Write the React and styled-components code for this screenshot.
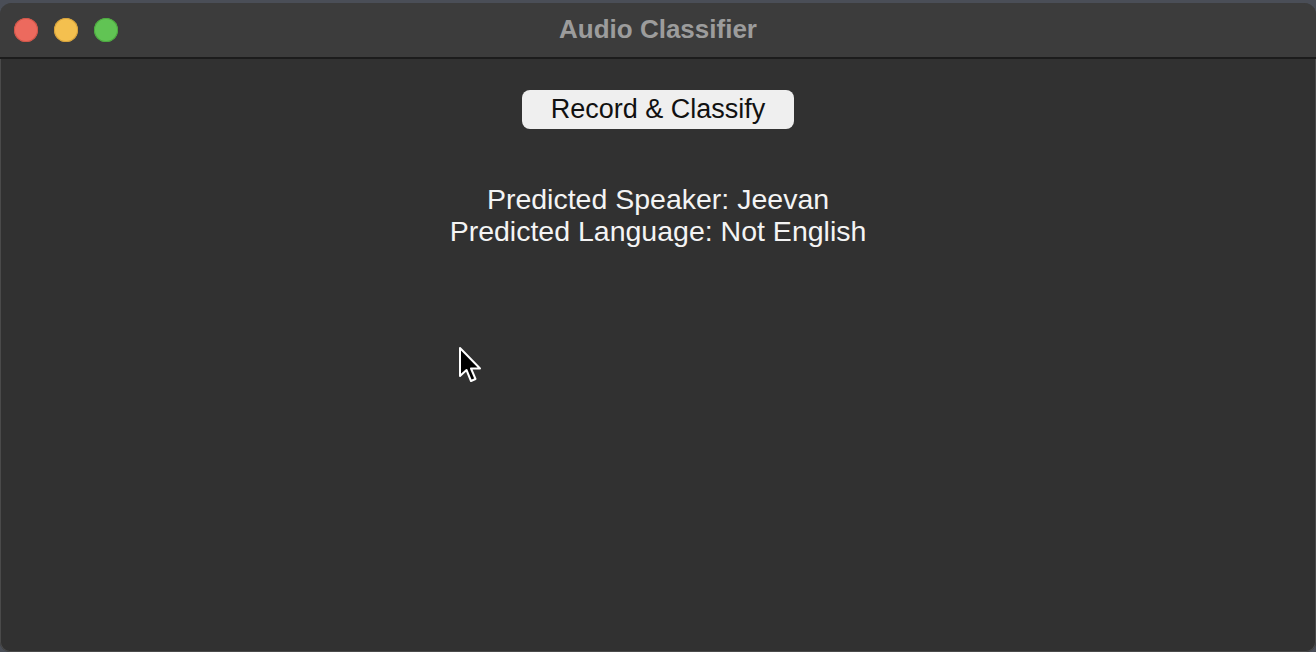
import React from 'react';
import styled, { createGlobalStyle } from 'styled-components';

const GlobalStyle = createGlobalStyle`
  html, body {
    margin: 0;
    padding: 0;
    height: 100%;
    background: #4a4e57;
    overflow: hidden;
  }
  #root {
    height: 100%;
  }
`;

const Window = styled.div`
  position: relative;
  height: calc(100% - 3px);
  margin-top: 3px;
  display: flex;
  flex-direction: column;
  background: #313131;
  border-radius: 12px 12px 10px 10px;
  overflow: hidden;
  box-shadow: inset 0 0 0 1px #4a4a4a;
  font-family: 'Liberation Sans', Arial, sans-serif;
`;

const TitleBar = styled.div`
  position: relative;
  height: 54px;
  flex-shrink: 0;
  display: flex;
  align-items: center;
  justify-content: center;
  background: #3c3c3c;
  border-bottom: 2px solid #1c1c1c;
`;

const Lights = styled.div`
  position: absolute;
  left: 14px;
  top: 15px;
  display: flex;
  gap: 16px;
`;

const Light = styled.span`
  width: 24px;
  height: 24px;
  border-radius: 50%;
  background: ${(p) => p.color};
  box-shadow: inset 0 0 0 1px ${(p) => p.edge};
`;

const Title = styled.div`
  font-size: 26px;
  font-weight: bold;
  color: #9c9c9c;
  margin-top: -2px;
`;

const Content = styled.div`
  flex: 1;
  display: flex;
  flex-direction: column;
  align-items: center;
  padding-top: 31px;
`;

const Button = styled.button`
  width: 272px;
  height: 39px;
  border: none;
  border-radius: 8px;
  background: #efefef;
  color: #111;
  font-family: 'Liberation Sans', Arial, sans-serif;
  font-size: 27px;
  padding: 0;
  cursor: default;
`;

const Result = styled.div`
  margin-top: 54px;
  text-align: center;
  color: #f4f4f4;
  font-size: 28.5px;
  line-height: 32px;
`;

const Cursor = styled.svg`
  position: absolute;
  left: 458px;
  top: 343px;
`;

export default function App() {
  return (
    <>
      <GlobalStyle />
      <Window>
        <TitleBar>
          <Lights>
            <Light color="#ec6a5e" edge="#d05548" />
            <Light color="#f4c04f" edge="#d6a13a" />
            <Light color="#61c454" edge="#4ca93f" />
          </Lights>
          <Title>Audio Classifier</Title>
        </TitleBar>
        <Content>
          <Button>Record &amp; Classify</Button>
          <Result>
            <div>Predicted Speaker: Jeevan</div>
            <div>Predicted Language: Not English</div>
          </Result>
        </Content>
        <Cursor width="28" height="40" viewBox="0 0 28 40">
          <path
            d="M2 2 L2 30 L8.5 24 L13 35 L17.5 33 L13 22.5 L22 22.5 Z"
            fill="#000"
            stroke="#fff"
            strokeWidth="2"
            strokeLinejoin="round"
          />
        </Cursor>
      </Window>
    </>
  );
}
